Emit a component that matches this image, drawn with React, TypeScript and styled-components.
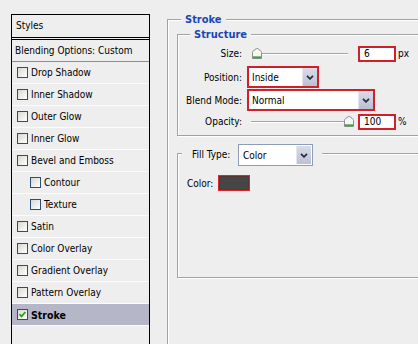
import React from "react";
import styled, { createGlobalStyle } from "styled-components";

const Global = createGlobalStyle`
  html, body { margin: 0; padding: 0; background: #eeeeee; }
  body {
    font-family: "DejaVu Sans Condensed", "DejaVu Sans", sans-serif;
    font-stretch: condensed;
    font-size: 10px;
    color: #000;
  }
  #root { width: 418px; height: 344px; overflow: hidden; }
`;

const Screen = styled.div`
  width: 418px;
  height: 344px;
  overflow: hidden;
  display: flex;
  align-items: flex-start;
  background: #eeeeee;
`;

/* ---------- left list ---------- */
const StylesPanel = styled.div`
  flex: none;
  margin: 14px 0 0 11px;
  width: 137px;
  height: 329px;
  border: 1px solid #000;
  border-bottom: none;
  background: #eeeeee;
`;

const PanelHeader = styled.div`
  height: 22px;
  line-height: 22px;
  padding-left: 4px;
  border-bottom: 3px double #000;
`;

const BlendingRow = styled.div`
  height: 21px;
  line-height: 21px;
  padding-left: 3px;
  border-bottom: 1px solid #8e8e8e;
`;

const StyleRow = styled.div<{ $indent?: boolean; $selected?: boolean }>`
  height: 21px;
  display: flex;
  align-items: center;
  gap: 3px;
  padding-left: ${(p) => (p.$indent ? 18 : 5)}px;
  border-bottom: 1px solid #fbfbfb;
  background: ${(p) => (p.$selected ? "#b5b6c8" : "transparent")};
  font-weight: ${(p) => (p.$selected ? "bold" : "normal")};
  font-size: ${(p) => (p.$selected ? 10.5 : 10)}px;
`;

const Box = styled.span`
  flex: none;
  width: 9px;
  height: 9px;
  border: 1px solid #2b4f74;
  background: linear-gradient(135deg, #d8d8d2 0%, #f4f4f0 70%, #ffffff 100%);
  display: flex;
  align-items: center;
  justify-content: center;
`;

const CheckBox = ({ checked }: { checked?: boolean }) => (
  <Box>
    {checked && (
      <svg width="9" height="9" viewBox="0 0 9 9">
        <path d="M1.5 4.2 L3.5 6.4 L7.4 2" fill="none" stroke="#21a121" strokeWidth="1.7" />
      </svg>
    )}
  </Box>
);

/* ---------- right side ---------- */
const RightArea = styled.div`
  flex: none;
  margin-left: 17px;
  width: 320px;
`;

const Group = styled.fieldset`
  margin: 0;
  min-width: 0;
  border: 1px solid #a2a2a2;
  box-shadow: inset 1px 1px 0 #ffffff, 1px 1px 0 #ffffff;
`;

const OuterGroup = styled(Group)`
  margin-top: 13px;
  padding: 2px 0 0 9px;
  height: 400px;
`;

const StructureGroup = styled(Group)`
  padding: 0 0 3px 0;
`;

const FillGroup = styled(Group)`
  margin-top: 5px;
  padding: 9px 0 0 4px;
`;

const Legend = styled.legend<{ $inset: number }>`
  margin-left: ${(p) => p.$inset}px;
  padding: 0 4px;
  height: 13px;
  line-height: 13px;
  font-size: 11px;
  font-weight: bold;
  color: #1b46b4;
  background: #eeeeee;
`;

const FillLegend = styled.legend`
  box-sizing: border-box;
  height: 25px;
  padding: 3px 9px 0 10px;
  display: flex;
  align-items: center;
  gap: 5px;
  background: #eeeeee;
`;

const FillLabel = styled.span`
  width: 41px;
  white-space: nowrap;
  margin-bottom: 2px;
`;

const FieldRow = styled.div<{ $h: number; $mt?: number }>`
  height: ${(p) => p.$h}px;
  margin-top: ${(p) => p.$mt ?? 0}px;
  display: grid;
  grid-template-columns: 64px auto;
  column-gap: 5px;
  align-items: center;
`;

const Label = styled.span`
  text-align: right;
  white-space: nowrap;
`;

const Controls = styled.div`
  display: flex;
  align-items: center;
`;

const SliderField = styled.div`
  width: 149px;
  display: flex;
  align-items: center;
`;

const Slider = styled.div<{ $ml: number; $w: number }>`
  margin-left: ${(p) => p.$ml}px;
  width: ${(p) => p.$w}px;
  height: 11px;
  display: flex;
  align-items: center;
`;

const Track = styled.div`
  flex: 1;
  height: 1px;
  background: #a4a4a4;
  border-bottom: 1px solid #ffffff;
`;

const Thumb = () => (
  <svg width="10" height="11" viewBox="0 0 10 11" style={{ flex: "none" }}>
    <path d="M0.5 4.5 Q0.5 3.5 2 2.2 L4.2 0.7 Q5 0.2 5.8 0.7 L8 2.2 Q9.5 3.5 9.5 4.5 V10.5 H0.5 Z" fill="#f6f6f2" stroke="#8d8d8d" />
    <rect x="1" y="8.3" width="8" height="1.9" fill="#3ea83e" />
  </svg>
);

const NumberBox = styled.div`
  box-sizing: border-box;
  margin-left: auto;
  width: 38px;
  height: 16px;
  border: 2px solid #d0202a;
  background: #ffffff;
  padding-left: 4px;
  line-height: 12px;
`;

const Unit = styled.span`
  margin-left: 2px;
`;

const SelectBox = styled.div<{ $w: number; $red?: boolean }>`
  box-sizing: border-box;
  width: ${(p) => p.$w}px;
  height: 22px;
  border: ${(p) => (p.$red ? "2px solid #d0202a" : "1px solid #8d9db6")};
  padding: ${(p) => (p.$red ? 0 : 1)}px;
  background: #ffffff;
  display: flex;
  align-items: stretch;
`;

const SelectText = styled.span`
  flex: 1;
  padding-left: 3px;
  display: flex;
  align-items: center;
`;

const DropButton = styled.span`
  flex: none;
  width: 14px;
  background: linear-gradient(#d9dbe8, #bcc0d4);
  border-left: 1px solid #e4e6ee;
  display: flex;
  align-items: center;
  justify-content: center;
`;

const Select = ({ value, width, red }: { value: string; width: number; red?: boolean }) => (
  <SelectBox $w={width} $red={red}>
    <SelectText>{value}</SelectText>
    <DropButton>
      <svg width="8" height="5" viewBox="0 0 8 5">
        <path d="M1 0.8 L4 3.8 L7 0.8" fill="none" stroke="#2a2e3c" strokeWidth="1.8" />
      </svg>
    </DropButton>
  </SelectBox>
);

const FillBody = styled.div`
  height: 102px;
  padding-left: 5px;
`;

const ColorRow = styled.div`
  display: flex;
  align-items: center;
`;

const ColorLabel = styled.span`
  width: 31px;
  white-space: nowrap;
`;

const Swatch = styled.span`
  box-sizing: border-box;
  width: 32px;
  height: 16px;
  border: 1px solid #e0262c;
  box-shadow: inset 0 0 0 1px #5a3434;
  background: #464646;
`;

const effects: { name: string; indent?: boolean; checked?: boolean }[] = [
  { name: "Drop Shadow" },
  { name: "Inner Shadow" },
  { name: "Outer Glow" },
  { name: "Inner Glow" },
  { name: "Bevel and Emboss" },
  { name: "Contour", indent: true },
  { name: "Texture", indent: true },
  { name: "Satin" },
  { name: "Color Overlay" },
  { name: "Gradient Overlay" },
  { name: "Pattern Overlay" },
  { name: "Stroke", checked: true },
];

export default function App() {
  return (
    <Screen>
      <Global />
      <StylesPanel>
        <PanelHeader>Styles</PanelHeader>
        <BlendingRow>Blending Options: Custom</BlendingRow>
        {effects.map((e) => (
          <StyleRow key={e.name} $indent={e.indent} $selected={e.checked}>
            <CheckBox checked={e.checked} />
            <span>{e.name}</span>
          </StyleRow>
        ))}
      </StylesPanel>

      <RightArea>
        <OuterGroup>
          <Legend $inset={4}>Stroke</Legend>
          <StructureGroup>
            <Legend $inset={12}>Structure</Legend>
            <FieldRow $h={25}>
              <Label>Size:</Label>
              <Controls>
                <SliderField>
                  <Slider $ml={5} $w={96}>
                    <Thumb />
                    <Track />
                  </Slider>
                  <NumberBox>6</NumberBox>
                </SliderField>
                <Unit>px</Unit>
              </Controls>
            </FieldRow>
            <FieldRow $h={22}>
              <Label>Position:</Label>
              <Controls>
                <Select value="Inside" width={72} red />
              </Controls>
            </FieldRow>
            <FieldRow $h={22} $mt={1}>
              <Label>Blend Mode:</Label>
              <Controls>
                <Select value="Normal" width={128} red />
              </Controls>
            </FieldRow>
            <FieldRow $h={21}>
              <Label>Opacity:</Label>
              <Controls>
                <SliderField>
                  <Slider $ml={4} $w={103}>
                    <Track />
                    <Thumb />
                  </Slider>
                  <NumberBox>100</NumberBox>
                </SliderField>
                <Unit>%</Unit>
              </Controls>
            </FieldRow>
          </StructureGroup>

          <FillGroup>
            <FillLegend>
              <FillLabel>Fill Type:</FillLabel>
              <Select value="Color" width={75} />
            </FillLegend>
            <FillBody>
              <ColorRow>
                <ColorLabel>Color:</ColorLabel>
                <Swatch />
              </ColorRow>
            </FillBody>
          </FillGroup>
        </OuterGroup>
      </RightArea>
    </Screen>
  );
}
